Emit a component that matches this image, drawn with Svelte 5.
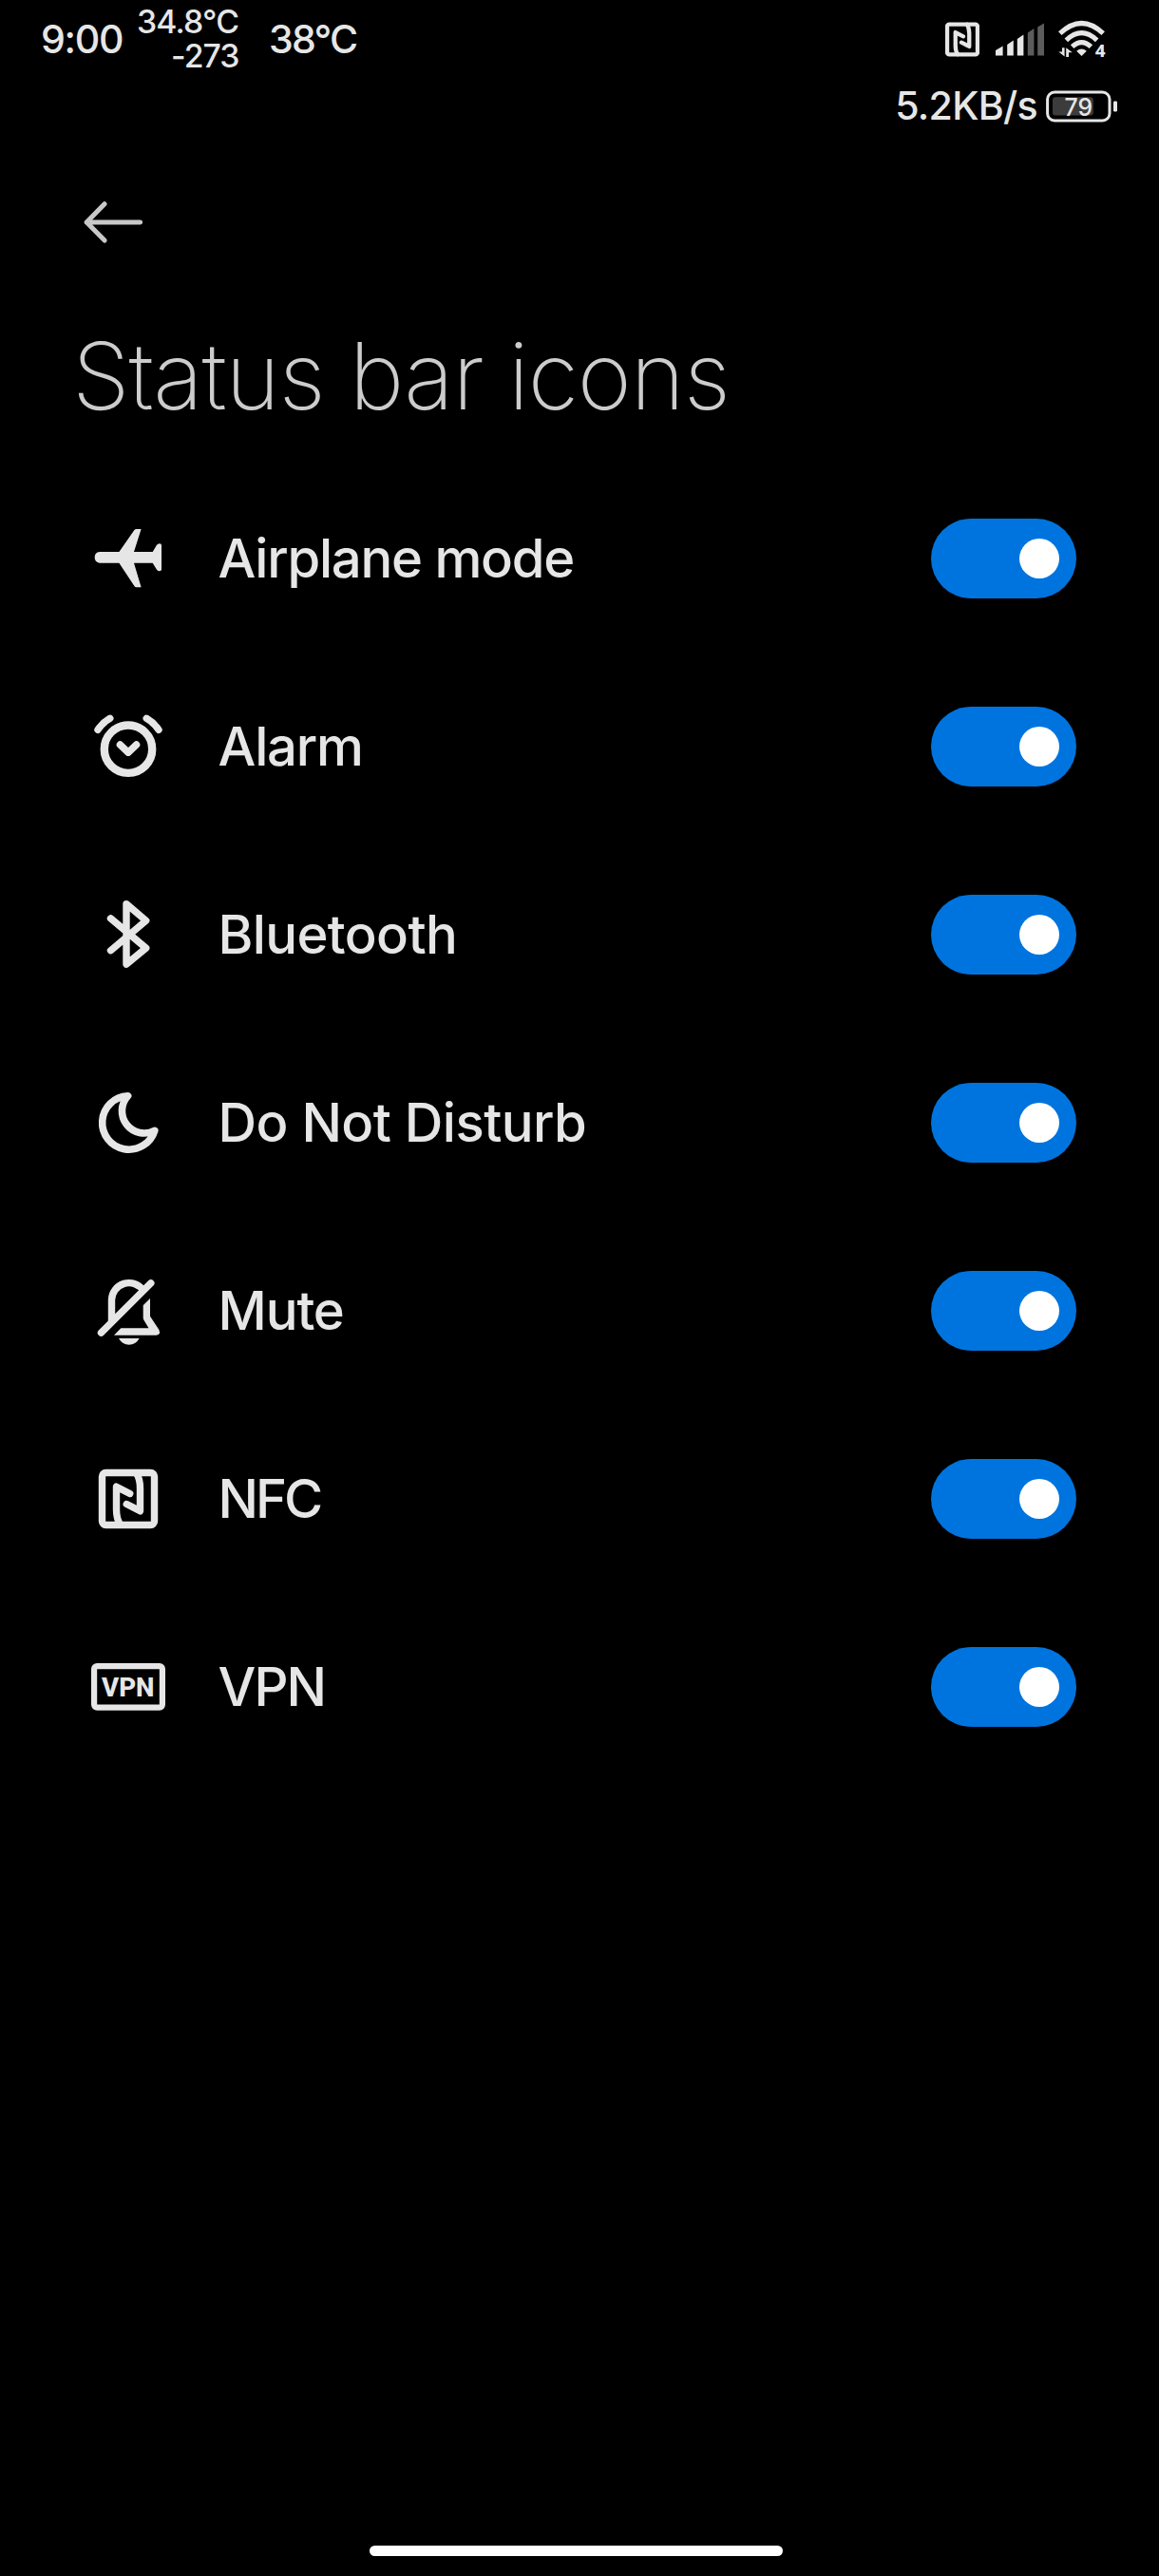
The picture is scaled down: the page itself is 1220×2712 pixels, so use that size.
<script>
  let items = $state([
    { id: 'airplane', label: 'Airplane mode', on: true },
    { id: 'alarm', label: 'Alarm', on: true },
    { id: 'bluetooth', label: 'Bluetooth', on: true },
    { id: 'dnd', label: 'Do Not Disturb', on: true },
    { id: 'mute', label: 'Mute', on: true },
    { id: 'nfc', label: 'NFC', on: true },
    { id: 'vpn', label: 'VPN', on: true },
  ]);
</script>

{#snippet nfcMark()}
  <rect x="12.5" y="12.5" width="55" height="55" rx="4" />
  <path d="M41.7 34.5 L27.5 27.2 V51 Q27.5 61 31.5 67" />
  <path d="M38.3 45.5 L52.5 52.8 V29 Q52.5 19 48.5 13" />
{/snippet}

{#snippet rowIcon(id)}
  <svg class="icon" viewBox="0 0 80 80" aria-hidden="true">
    {#if id === 'airplane'}
      <path class="solid" d="M9.8 33 H30.4 L46.4 10 Q47.2 9 48.5 9 H53.6 L46 33 H65.7 L70 25.8 Q71.2 24.3 73 24.3 Q75 24.5 75 26 V51.5 Q75 53.2 73 53.2 Q71.2 53.2 70 51.7 L65.7 44.7 H46 L53.6 70.3 H48.5 Q47.2 70.3 46.4 69 L30.4 44.7 H9.8 A5.9 5.9 0 0 1 9.8 33 Z" />
    {:else if id === 'alarm'}
      <circle class="thick" cx="40" cy="42.7" r="25.2" />
      <path d="M31.4 38 L40 46.2 L48.6 38" />
      <path d="M8 22.3 A38 38 0 0 1 20.8 10.3" />
      <path d="M72 22.3 A38 38 0 0 0 59.2 10.3" />
    {:else if id === 'bluetooth'}
      <path d="M21.5 22.9 L58.7 54.2 L38 71.2 V7.6 L58.7 25.2 L21.5 56.7" />
    {:else if id === 'dnd'}
      <path class="moon" d="M39.6 11.8 A28.2 28.2 0 1 0 67.8 48.3 A23.4 23.4 0 0 1 39.6 11.8 Z" />
    {:else if id === 'mute'}
      <path d="M11.5 63.2 L63.8 10.9" />
      <path class="butt" d="M22.5 51.5 V28.8 A18.2 18.2 0 0 1 56 19" />
      <path class="solid" d="M63 27 V45.7 L72.4 60 Q73.8 63 72.4 64.6 Q71.3 65.7 69.5 65.7 H25 L32.3 58.3 H61.5 L56.4 49.8 Q55.7 48.6 55.7 47 V34.3 Z" />
      <path class="solid" d="M30 69 H51.7 Q48 75.7 40.8 75.7 Q33.7 75.7 30 69 Z" />
    {:else if id === 'nfc'}
      {@render nfcMark()}
    {:else}
      <rect class="frame" x="4.1" y="18.1" width="71.8" height="43.5" rx="3" />
      <text class="vpn-text" x="12" y="50" textLength="55.5" lengthAdjust="spacingAndGlyphs">VPN</text>
    {/if}
  </svg>
{/snippet}

<div class="screen">
  <header class="status">
    <div class="status-row">
      <div class="readings">
        <span class="clock">9:00</span>
        <span class="stack"><span>34.8°C</span><span class="lower">-273</span></span>
        <span class="temp">38°C</span>
      </div>
      <div class="signals">
        <svg class="nfc-small" viewBox="9 9 62 62" aria-hidden="true">{@render nfcMark()}</svg>
        <svg class="bars" viewBox="0 0 51 36" aria-hidden="true">
          <path d="M0 35.5 V30 L7.6 25.5 V35.5 Z M12.2 35.5 V24 L18.8 19.5 V35.5 Z M22.8 35.5 V18 L29.4 13.5 V35.5 Z" />
          <path class="dim" d="M33.8 35.5 V11.5 L40.4 7 V35.5 Z M44.2 35.5 V5.5 L51 1.5 V35.5 Z" />
        </svg>
        <svg class="wifi" viewBox="0 0 52 46" aria-hidden="true">
          <path class="arc" d="M1.8 17.2 Q24.5 -4.2 47.2 17.2" />
          <path class="arc" d="M8.3 24.3 Q24.5 9 40.7 24.3" />
          <path class="arc" d="M14.6 31.2 Q24.5 22 34.4 31.2" />
          <path class="fan" d="M19.2 35.8 Q24.5 31.2 29.8 35.8 L24.5 41 Z" />
          <path class="fan" d="M4 32.3 H6.6 V41.5 L0.3 36.5 H4 Z M8.2 42 V32.2 L14.8 37.2 H11 V42 Z" />
          <text class="gen" x="38.5" y="42" textLength="11.3" lengthAdjust="spacingAndGlyphs">4</text>
        </svg>
      </div>
    </div>
    <div class="power-row">
      <span class="speed">5.2KB/s</span>
      <svg class="battery" viewBox="0 0 76 34" aria-hidden="true">
        <rect class="shell" x="2.6" y="2" width="65.4" height="30" rx="7.5" />
        <rect class="level" x="8" y="7.2" width="42.8" height="19.3" rx="3" />
        <rect class="nub" x="72" y="11.5" width="4" height="11" rx="1.2" />
        <text class="percent" x="20.5" y="27" textLength="29.5" lengthAdjust="spacingAndGlyphs">79</text>
      </svg>
    </div>
  </header>

  <button class="back" aria-label="Back">
    <svg viewBox="0 0 62 44" aria-hidden="true"><path d="M22 2.7 L3.2 21.9 L22 41.1 M3.2 21.9 H59.6" /></svg>
  </button>

  <h1>Status bar icons</h1>

  <main>
    {#each items as item (item.id)}
      <div class="row">
        {@render rowIcon(item.id)}
        <span class="label {item.id}">{item.label}</span>
        <button
          class="switch"
          class:off={!item.on}
          role="switch"
          aria-checked={item.on}
          aria-label={item.label}
          onclick={() => (item.on = !item.on)}
        ><span class="thumb"></span></button>
      </div>
    {/each}
  </main>

  <footer><div class="home"></div></footer>
</div>

<style>
  :global(body) {
    background: #000;
  }
  .screen {
    box-sizing: border-box;
    width: 1220px;
    height: 2712px;
    display: flex;
    flex-direction: column;
    background: #000;
    color: #e6e6e6;
    font-family: Inter, Roboto, sans-serif;
    font-weight: 480;
    overflow: hidden;
  }
  svg {
    display: block;
    flex: none;
    fill: none;
    stroke: #e6e6e6;
    stroke-width: 7.4;
    stroke-linecap: round;
    stroke-linejoin: round;
  }
  button {
    border: 0;
    padding: 0;
    background: none;
  }
  .status {
    height: 141px;
    flex: none;
  }
  .status-row {
    height: 82px;
    display: flex;
    justify-content: space-between;
    align-items: center;
    padding: 0 54px 0 43px;
  }
  .readings {
    display: grid;
    grid-template-columns: 101px 109px auto;
    align-items: center;
    white-space: nowrap;
  }
  .clock {
    font-size: 41.1px;
    line-height: 60px;
    font-weight: 550;
    letter-spacing: -1.3px;
  }
  .stack {
    display: flex;
    flex-direction: column;
    font-size: 33.8px;
    line-height: 36px;
    letter-spacing: -0.85px;
  }
  .lower {
    align-self: flex-end;
    margin-right: 1.5px;
    letter-spacing: -1px;
  }
  .temp {
    margin-left: 30px;
    font-size: 41.1px;
    line-height: 60px;
    letter-spacing: -1.8px;
  }
  .signals {
    display: flex;
    align-items: center;
  }
  .nfc-small {
    width: 36px;
    height: 37px;
  }
  .bars {
    width: 51px;
    height: 36px;
    margin-left: 17px;
  }
  .bars path {
    fill: #e6e6e6;
    stroke: none;
  }
  .bars .dim {
    fill: #5c5c5c;
  }
  .wifi {
    width: 52px;
    height: 46px;
    margin-left: 15px;
  }
  .wifi .arc {
    stroke-width: 5.1;
    stroke-linecap: butt;
  }
  .wifi .fan {
    fill: #e6e6e6;
    stroke: none;
  }
  .gen {
    fill: #e6e6e6;
    stroke: none;
    font: 800 18.5px Roboto, sans-serif;
  }
  .power-row {
    height: 59px;
    display: flex;
    justify-content: flex-end;
    align-items: center;
    gap: 8px;
    padding-right: 44px;
  }
  .speed {
    font-size: 41.1px;
    line-height: 59px;
    letter-spacing: -0.7px;
  }
  .battery {
    width: 76px;
    height: 34px;
  }
  .battery .shell {
    stroke-width: 3;
  }
  .battery .level {
    fill: #3c3c3c;
    stroke: none;
  }
  .battery .nub {
    fill: #e6e6e6;
    stroke: none;
  }
  .percent {
    fill: #e6e6e6;
    stroke: none;
    font-size: 26px;
  }
  .back {
    width: 62px;
    height: 44px;
    margin: 71px 0 0 88px;
    flex: none;
  }
  .back svg {
    width: 62px;
    height: 44px;
    stroke: #c8c8c8;
    stroke-width: 5;
  }
  h1 {
    margin: 85px 0 38px 76px;
    height: 110px;
    flex: none;
    font-size: 97.3px;
    line-height: 110px;
    font-weight: 230;
    letter-spacing: -1.1px;
    color: #cccccc;
    white-space: nowrap;
  }
  main {
    flex: 1;
  }
  .row {
    height: 198px;
    display: flex;
    align-items: center;
    padding: 0 87px 0 95px;
  }
  .icon {
    width: 80px;
    height: 80px;
  }
  .solid {
    fill: #e6e6e6;
    stroke: none;
  }
  .thick {
    stroke-width: 8.4;
  }
  .moon {
    stroke-width: 7.6;
  }
  .butt {
    stroke-linecap: butt;
  }
  .frame {
    stroke-width: 6.2;
  }
  .vpn-text {
    fill: #e6e6e6;
    stroke: none;
    font: 800 28px Roboto, sans-serif;
  }
  .label {
    flex: 1;
    margin-left: 54.5px;
    font-size: 56.2px;
    line-height: 80px;
    white-space: nowrap;
  }
  .airplane { letter-spacing: -1.26px; }
  .alarm { letter-spacing: -1.2px; }
  .bluetooth { letter-spacing: -0.63px; }
  .dnd { letter-spacing: -0.53px; }
  .mute { letter-spacing: -1.1px; }
  .nfc { letter-spacing: -3px; }
  .vpn { letter-spacing: -1.9px; }
  .switch {
    width: 153px;
    height: 84px;
    border-radius: 42px;
    background: #0074de;
    display: flex;
    align-items: center;
    justify-content: flex-end;
    padding: 0 18px;
  }
  .switch.off {
    background: #333;
    justify-content: flex-start;
  }
  .thumb {
    width: 42px;
    height: 42px;
    border-radius: 50%;
    background: #fff;
  }
  footer {
    flex: none;
    height: 32px;
    display: flex;
    justify-content: center;
    padding-right: 7px;
  }
  .home {
    width: 435px;
    height: 11px;
    border-radius: 5.5px;
    background: #fff;
  }
</style>
